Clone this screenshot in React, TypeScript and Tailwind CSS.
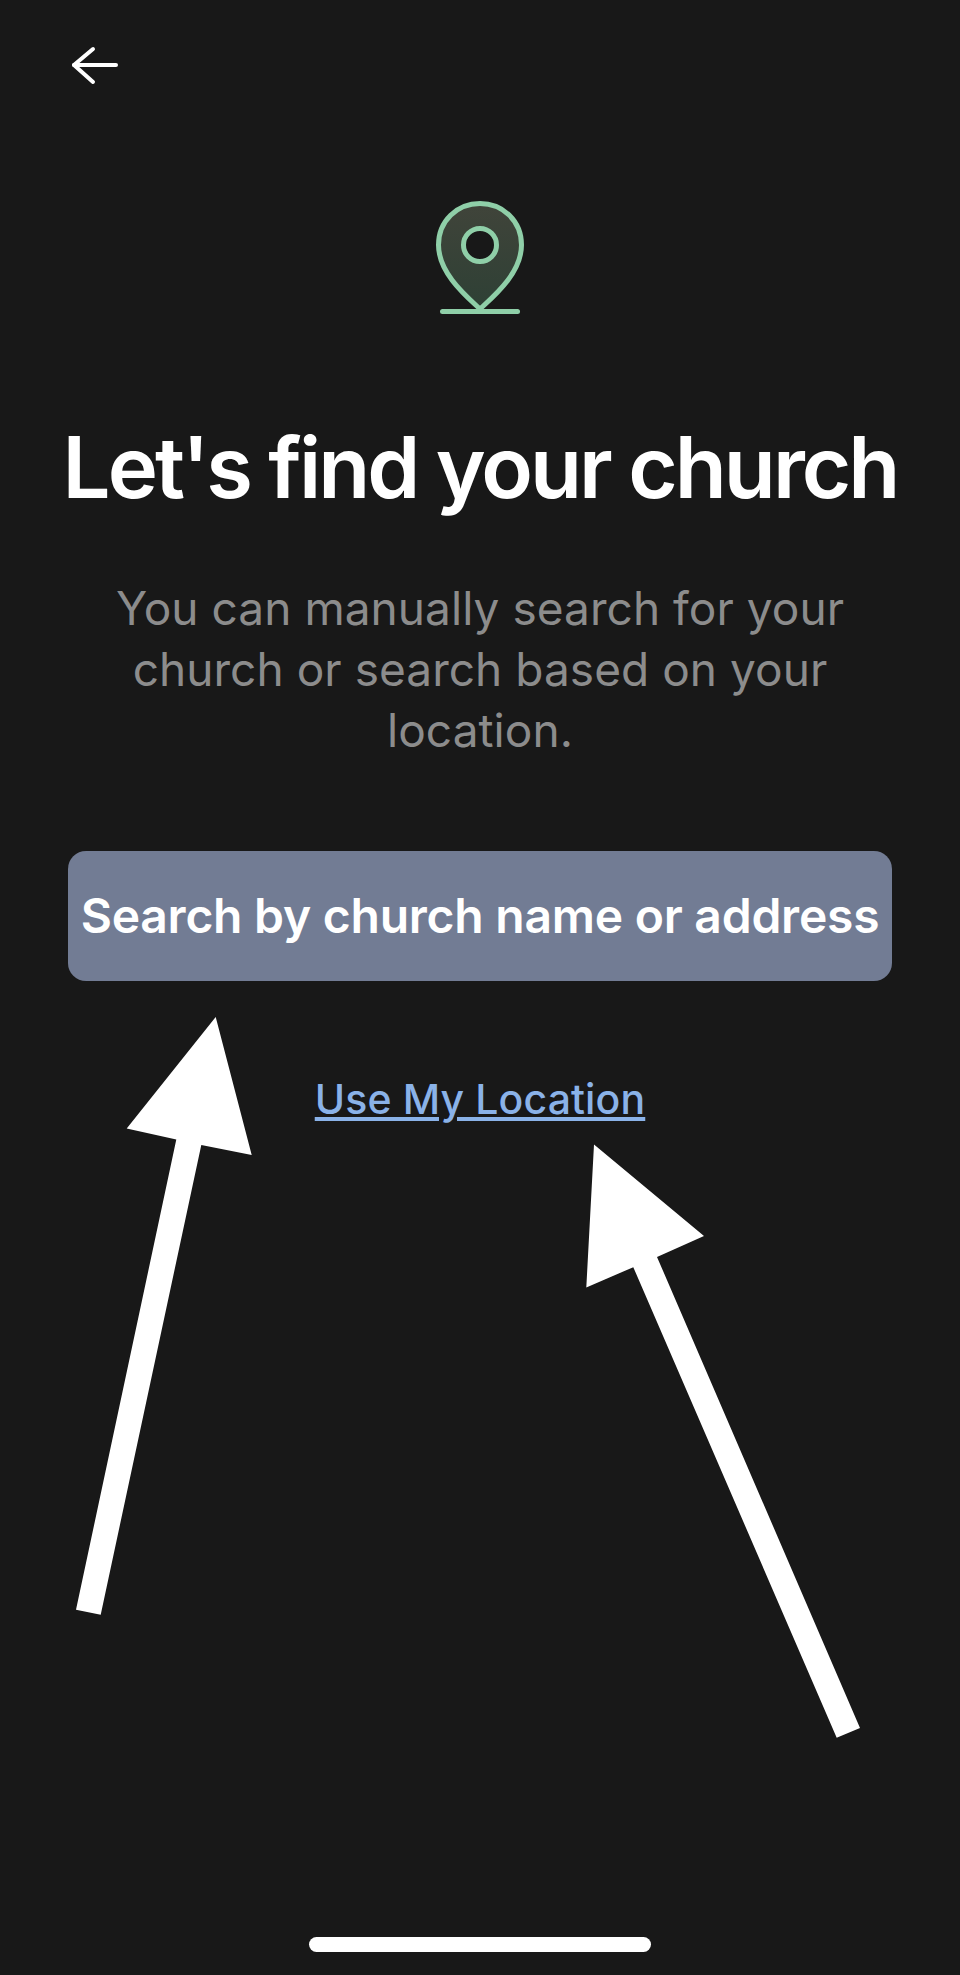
import React from 'react';

function BackArrow() {
  return (
    <svg width="52" height="44" viewBox="0 0 52 44" fill="none" stroke="#ffffff" strokeWidth="4" strokeLinecap="round" strokeLinejoin="round">
      <path d="M6 22 H48" />
      <path d="M25 6 L6 22 L25 39" />
    </svg>
  );
}

function PinIcon() {
  return (
    <svg width="88" height="114" viewBox="0 0 88 114" fill="none">
      <defs>
        <linearGradient id="pinFill" x1="0" y1="0" x2="0" y2="1">
          <stop offset="0" stopColor="#40443a" />
          <stop offset="1" stopColor="#2e4035" />
        </linearGradient>
      </defs>
      <path
        d="M44 108 C30 95 2.500 72 2.500 44 C2.500 20 21 2.500 44 2.500 C67 2.500 85.500 20 85.500 44 C85.500 72 58 95 44 108 Z"
        fill="url(#pinFill)"
        stroke="#8fcfa8"
        strokeWidth="5"
        strokeLinejoin="round"
      />
      <circle cx="44" cy="44" r="16.500" fill="#181818" stroke="#8fcfa8" strokeWidth="5" />
      <path d="M6.500 110.500 H81.500" stroke="#8fcfa8" strokeWidth="5" strokeLinecap="round" />
    </svg>
  );
}

export default function App() {
  return (
    <div className="relative flex h-[1975px] w-[960px] flex-col overflow-hidden bg-[#181818] font-['Inter',sans-serif]">
      <div className="pl-[68px] pt-[43px]">
        <BackArrow />
      </div>

      <div className="mt-[114px] flex justify-center">
        <PinIcon />
      </div>

      <h1 className="mt-[105px] text-center text-[85px] leading-[96px] font-semibold tracking-[-0.035em] whitespace-nowrap text-white">
        Let's find your church
      </h1>

      <p className="mt-[62px] text-center text-[46px] leading-[61px] tracking-[0.001em] text-[#8c8c8c]">
        You can manually search for your
        <br />
        church or search based on your
        <br />
        location.
      </p>

      <div className="mt-[90px] px-[68px]">
        <button className="flex h-[130px] w-full items-center justify-center rounded-[18px] bg-[#727c94] text-[48px] font-semibold tracking-[-0.005em] whitespace-nowrap text-white">
          Search by church name or address
        </button>
      </div>

      <a className="mt-[93px] self-center text-[41px] leading-[50px] font-medium tracking-[0.003em] text-[#8ab2e8] underline">
        Use My Location
      </a>

      {/* annotation arrows drawn over the screenshot */}
      <svg className="absolute top-0 left-0" width="960" height="1975" viewBox="0 0 960 1975" fill="#ffffff">
        <polygon points="215.700,1017 126.700,1128.600 176.300,1139.600 76,1609.800 100.700,1614.700 201.300,1144.900 251.700,1155" />
        <polygon points="594,1144.600 704,1236 657,1256.900 860,1727.900 836.700,1737.700 633.300,1267.200 586.300,1287.400" />
      </svg>

      <div className="absolute bottom-[23px] left-[309px] h-[15px] w-[342px] rounded-full bg-white" />
    </div>
  );
}
